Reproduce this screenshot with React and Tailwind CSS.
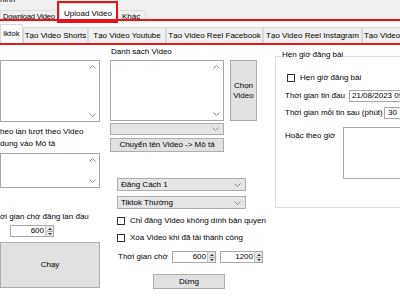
function Chev({ up, className = "" }) {
  return (
    <svg width="7" height="4" viewBox="0 0 7 4" className={className}>
      <polyline
        points={up ? "0.5,3.5 3.5,0.5 6.5,3.5" : "0.5,0.5 3.5,3.5 6.5,0.5"}
        fill="none"
        stroke="#8a8a8a"
        strokeWidth="1"
      />
    </svg>
  );
}

function ScrollBox({ className = "" }) {
  return (
    <div className={`border border-[#a8a8a8] bg-white flex flex-col items-end justify-between py-[4px] pr-[3px] ${className}`}>
      <Chev up />
      <Chev />
    </div>
  );
}

function Combo({ text = "", className = "" }) {
  return (
    <div className={`border border-[#adadad] bg-[#e5e5e5] flex items-center justify-between pl-[3px] pr-[4px] ${className}`}>
      <span>{text}</span>
      <Chev />
    </div>
  );
}

function Spin() {
  return (
    <div className="w-[8px] h-full bg-[#e6e6e6] border-l border-[#c8c8c8] flex flex-col items-center justify-center gap-[1px]">
      <div className="w-0 h-0 border-l-[2px] border-r-[2px] border-b-[2px] border-l-transparent border-r-transparent border-b-[#333]" />
      <div className="w-[6px] h-px bg-[#aaa]" />
      <div className="w-0 h-0 border-l-[2px] border-r-[2px] border-t-[2px] border-l-transparent border-r-transparent border-t-[#333]" />
    </div>
  );
}

function Num({ value, className = "" }) {
  return (
    <div className={`border border-[#a8a8a8] bg-white flex items-stretch ${className}`}>
      <div className="flex-1 flex items-center justify-end pr-[1px]">{value}</div>
      <Spin />
    </div>
  );
}

function Check({ label, className = "" }) {
  return (
    <div className={`flex items-center gap-[5px] whitespace-nowrap ${className}`}>
      <div className="w-[8px] h-[8px] border border-[#333] bg-white shrink-0" />
      <span>{label}</span>
    </div>
  );
}

function Btn({ children, className = "" }) {
  return (
    <div className={`border border-[#adadad] bg-[#e1e1e1] flex items-center justify-center text-center whitespace-nowrap ${className}`}>
      {children}
    </div>
  );
}

export default function App() {
  const inner = [
    ["iktok", "w-[23px]", true],
    ["Tạo Video Shorts", "w-[65px]"],
    ["Tạo Video Youtube", "w-[78px]"],
    ["Tạo Video Reel Facebook", "w-[97px]"],
    ["Tạo Video Reel Instagram", "w-[99px]"],
    ["Tạo Video Reel Tiktok", "w-[82px]"],
  ];
  return (
    <div className="relative w-[400px] h-[300px] overflow-hidden bg-white text-[8px] leading-none text-black font-['Liberation_Sans',Arial,sans-serif]">
      {/* outer tab strip */}
      <div className="relative h-[22px] bg-[#f0f0f0]">
        <div className="absolute -top-[4px] left-0">ninh</div>
        <div className="absolute bottom-0 left-0 flex items-end whitespace-nowrap">
          <div className="w-[59px] h-[12px] border border-b-0 border-[#d9d9d9] bg-[#f0f0f0] flex items-center pl-[2px] text-[7.5px] tracking-[-0.2px]">Download Video</div>
          <div className="w-[58px] h-[19px] border border-b-0 border-[#d9d9d9] bg-white flex items-start justify-center pt-[6px]">Upload Video</div>
          <div className="w-[29px] h-[12px] border border-b-0 border-[#d9d9d9] bg-[#f0f0f0] flex items-center pl-[4px]">Khác</div>
        </div>
      </div>

      {/* inner tab strip */}
      <div className="h-[22px] flex items-end pt-[2px] border-b border-[#d9d9d9]">
        {inner.map(([t, w, sel]) => (
          <div
            key={t}
            className={`${w} shrink-0 flex items-center justify-center border border-b-0 border-[#d9d9d9] whitespace-nowrap overflow-hidden ${sel ? "h-[19px] bg-white" : "h-[16px] bg-[#f0f0f0]"}`}
          >
            {t}
          </div>
        ))}
      </div>

      {/* content */}
      <div className="flex">
        {/* left column */}
        <div className="w-[100px] shrink-0 flex flex-col">
          <ScrollBox className="mt-[16px] h-[62px]" />
          <div className="mt-[4px] leading-[12px] whitespace-nowrap">heo lần lượt theo Video</div>
          <div className="leading-[12px]">dung vào Mô tả</div>
          <ScrollBox className="mt-[3px] h-[35px]" />
          <div className="mt-[23px] leading-[12px] whitespace-nowrap">ời gian chờ đăng lần đầu</div>
          <Num value="600" className="mt-[2px] ml-[10px] w-[44px] h-[12px]" />
          <Btn className="mt-[5px] h-[46px]">Chạy</Btn>
        </div>

        {/* middle column */}
        <div className="ml-[10px] w-[153px] shrink-0 flex flex-col">
          <div className="mt-[2px] leading-[12px] pl-[1px]">Danh sách Video</div>
          <div className="mt-[2px] flex">
            <ScrollBox className="w-[114px] h-[61px]" />
            <Btn className="ml-[6px] w-[27px] h-[61px] leading-[10px]">
              Chọn
              <br />
              Video
            </Btn>
          </div>
          <Combo className="mt-[2px] w-[114px] h-[12px]" />
          <Btn className="mt-[3px] w-[114px] h-[14px]">Chuyển tên Video -&gt; Mô tả</Btn>
          <Combo text="Đăng Cách 1" className="mt-[26px] ml-[7px] w-[129px] h-[13px]" />
          <Combo text="Tiktok Thường" className="mt-[5px] ml-[7px] w-[129px] h-[13px]" />
          <Check label="Chỉ đăng Video không dính bản quyền" className="mt-[7px] ml-[7px] h-[10px]" />
          <Check label="Xóa Video khi đã tải thành công" className="mt-[7px] ml-[7px] h-[10px]" />
          <div className="mt-[8px] flex items-center h-[12px]">
            <span className="ml-[8px] w-[54px] whitespace-nowrap">Thời gian chờ</span>
            <Num value="600" className="w-[44px] h-[12px]" />
            <Num value="1200" className="ml-[4px] w-[43px] h-[12px]" />
          </div>
          <Btn className="mt-[11px] ml-[43px] w-[72px] h-[15px]">Dừng</Btn>
        </div>

        {/* right column: group box */}
        <div className="ml-[12px] flex-1">
          <div className="relative mt-[12px] h-[152px] w-[140px] border border-[#dcdcdc]">
            <div className="absolute -top-[6px] left-[5px] bg-white px-[1px] whitespace-nowrap">Hẹn giờ đăng bài</div>
            <Check label="Hẹn giờ đăng bài" className="mt-[16px] ml-[11px] h-[10px]" />
            <div className="mt-[7px] ml-[9px] flex items-center h-[12px]">
              <span className="w-[64px] whitespace-nowrap">Thời gian tin đầu</span>
              <div className="h-[12px] flex-1 border border-[#a8a8a8] flex items-center pl-[2px] whitespace-nowrap overflow-hidden">21/08/2023 09:00</div>
            </div>
            <div className="mt-[5px] ml-[9px] flex items-center h-[12px]">
              <span className="w-[99px] whitespace-nowrap">Thời gian mỗi tin sau (phút)</span>
              <div className="h-[12px] flex-1 border border-[#a8a8a8] flex items-center pl-[3px]">30</div>
            </div>
            <div className="mt-[8px] ml-[9px] flex items-start">
              <span className="w-[58px] mt-[5px] whitespace-nowrap">Hoặc theo giờ</span>
              <div className="h-[52px] flex-1 border border-[#a8a8a8]" />
            </div>
          </div>
        </div>
      </div>

      {/* red annotation boxes */}
      <div className="absolute left-[57px] top-[1px] w-[61px] h-[22px] border-2 border-[#e8141b]" />
      <div className="absolute -left-[2px] top-[19px] w-[404px] h-[26px] border-2 border-[#e8141b]" />
    </div>
  );
}
